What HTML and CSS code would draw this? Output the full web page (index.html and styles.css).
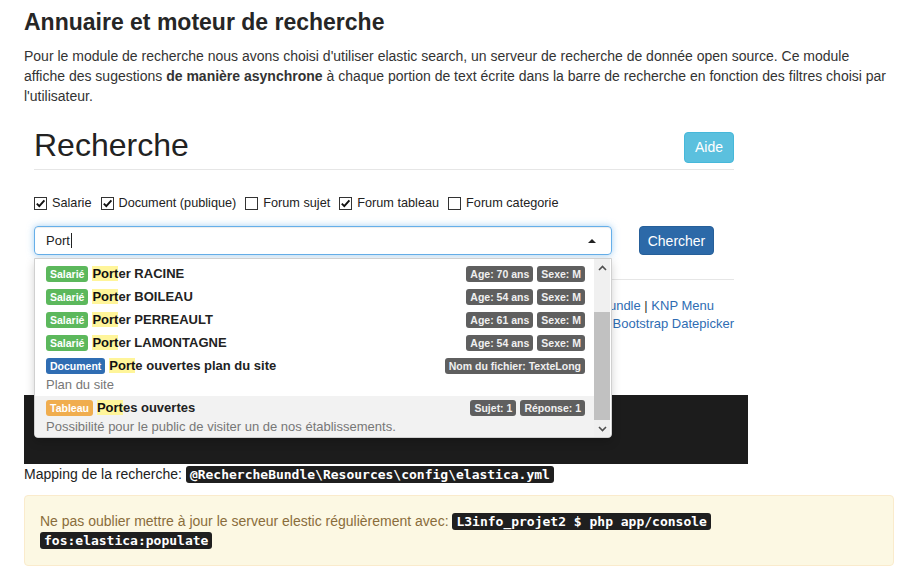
FILE: index.html
```html
<!DOCTYPE html>
<html lang="fr">
<head>
<meta charset="utf-8">
<title>Annuaire et moteur de recherche</title>
<link rel="stylesheet" href="styles.css">
</head>
<body>
<div class="page">
  <h2 class="title">Annuaire et moteur de recherche</h2>
  <p class="intro">Pour le module de recherche nous avons choisi d'utiliser elastic search, un serveur de recherche de donnée open source. Ce module affiche des sugestions <strong>de manière asynchrone</strong> à chaque portion de text écrite dans la barre de recherche en fonction des filtres choisi par l'utilisateur.</p>

  <div class="shot">
    <div class="shot-inner">
      <div class="head">
        <h1>Recherche</h1>
        <span class="btn btn-aide">Aide</span>
      </div>
      <div class="filters">
        <span class="filter"><span class="cb"><svg viewBox="0 0 11 11" width="11" height="11"><path d="M1.8 5.6 L4.3 8.2 L9.4 2.4" fill="none" stroke="#111" stroke-width="1.9"/></svg></span>Salarie</span>
        <span class="filter"><span class="cb"><svg viewBox="0 0 11 11" width="11" height="11"><path d="M1.8 5.6 L4.3 8.2 L9.4 2.4" fill="none" stroke="#111" stroke-width="1.9"/></svg></span>Document (publique)</span>
        <span class="filter"><span class="cb"></span>Forum sujet</span>
        <span class="filter"><span class="cb"><svg viewBox="0 0 11 11" width="11" height="11"><path d="M1.8 5.6 L4.3 8.2 L9.4 2.4" fill="none" stroke="#111" stroke-width="1.9"/></svg></span>Forum tableau</span>
        <span class="filter"><span class="cb"></span>Forum categorie</span>
      </div>
      <div class="search">
        <div class="search-input"><span class="typed">Port</span><span class="cursor"></span><span class="caret-up"></span></div>
        <span class="btn btn-go">Chercher</span>

        <div class="dropdown">
          <div class="list">
            <div class="row">
              <div class="line"><span class="lbl green">Salarié</span><span class="name"><mark>Port</mark>er DUPONT</span><span class="rbadges"><span class="lbl gray">Age: 40 ans</span><span class="lbl gray">Sexe: M</span></span></div>
            </div>
            <div class="row">
              <div class="line"><span class="lbl green">Salarié</span><span class="name"><mark>Port</mark>er RACINE</span><span class="rbadges"><span class="lbl gray">Age: 70 ans</span><span class="lbl gray">Sexe: M</span></span></div>
            </div>
            <div class="row">
              <div class="line"><span class="lbl green">Salarié</span><span class="name"><mark>Port</mark>er BOILEAU</span><span class="rbadges"><span class="lbl gray">Age: 54 ans</span><span class="lbl gray">Sexe: M</span></span></div>
            </div>
            <div class="row">
              <div class="line"><span class="lbl green">Salarié</span><span class="name"><mark>Port</mark>er PERREAULT</span><span class="rbadges"><span class="lbl gray">Age: 61 ans</span><span class="lbl gray">Sexe: M</span></span></div>
            </div>
            <div class="row">
              <div class="line"><span class="lbl green">Salarié</span><span class="name"><mark>Port</mark>er LAMONTAGNE</span><span class="rbadges"><span class="lbl gray">Age: 54 ans</span><span class="lbl gray">Sexe: M</span></span></div>
            </div>
            <div class="row">
              <div class="line"><span class="lbl blue">Document</span><span class="name"><mark>Port</mark>e ouvertes plan du site</span><span class="rbadges"><span class="lbl gray">Nom du fichier: TexteLong</span></span></div>
              <div class="sub">Plan du site</div>
            </div>
            <div class="row active">
              <div class="line"><span class="lbl orange">Tableau</span><span class="name"><mark>Port</mark>es ouvertes</span><span class="rbadges"><span class="lbl gray">Sujet: 1</span><span class="lbl gray">Réponse: 1</span></span></div>
              <div class="sub">Possibilité pour le public de visiter un de nos établissements.</div>
            </div>
          </div>
          <div class="scrollbar">
            <span class="sb-btn"><svg viewBox="0 0 9 6" width="9" height="6"><path d="M1 5 L4.5 1.5 L8 5" fill="none" stroke="#505050" stroke-width="1.6"/></svg></span>
            <span class="sb-track"><span class="sb-thumb"></span></span>
            <span class="sb-btn"><svg viewBox="0 0 9 6" width="9" height="6"><path d="M1 1 L4.5 4.5 L8 1" fill="none" stroke="#505050" stroke-width="1.6"/></svg></span>
          </div>
        </div>
      </div>
      <div class="sep"></div>
      <div class="links">
        <div class="link-line l1"><a>FOSUserBundle</a> | <a>FOSElasticaBundle</a> | <a>KNP Menu</a></div>
        <div class="link-line"><a>jQuery UI</a> | <a>Bootstrap Datepicker</a></div>
      </div>
    </div>
    <div class="black"></div>
  </div>

  <div class="mapping">Mapping de la recherche: <code>@RechercheBundle\Resources\config\elastica.yml</code></div>

  <div class="alert">Ne pas oublier mettre à jour le serveur elestic régulièrement avec: <code>L3info_projet2 $ php app/console fos:elastica:populate</code></div>
</div>
</body>
</html>
```
FILE: styles.css
```css
body {
  margin: 0;
  background: #fff;
  color: #333;
  font-family: "Liberation Sans", Arial, sans-serif;
}

.page {
  padding: 0 24px;
}

.title {
  margin: 9px 0 11px;
  font-size: 23px;
  line-height: 26px;
  font-weight: bold;
  color: #262626;
}

.intro {
  margin: 0;
  font-size: 14px;
  line-height: 20px;
  color: #333;
}

.shot {
  margin-top: 10px;
  width: 724px;
  background: #fff;
}

.shot-inner {
  padding: 0 14px 0 10px;
}

.head {
  display: flex;
  justify-content: space-between;
  align-items: center;
  padding: 13px 0 4px;
  border-bottom: 1px solid #e6e6e6;
}

.head h1 {
  margin: 0;
  padding-bottom: 4px;
  font-size: 32px;
  line-height: 32px;
  font-weight: normal;
  color: #222;
}

.btn {
  display: inline-flex;
  align-items: center;
  justify-content: center;
  box-sizing: border-box;
  border-radius: 4px;
  color: #fff;
  font-size: 14px;
}

.btn-aide {
  width: 50px;
  height: 31px;
  background: #5bc0de;
  border: 1px solid #46b8da;
}

.filters {
  display: flex;
  align-items: center;
  margin-top: 24px;
  height: 18px;
  font-size: 12.7px;
  color: #222;
}

.filter {
  display: inline-flex;
  align-items: center;
  margin-right: 9px;
}

.cb {
  display: inline-flex;
  align-items: center;
  justify-content: center;
  box-sizing: border-box;
  width: 13px;
  height: 13px;
  margin-right: 5px;
  border: 1px solid #333;
  background: #fff;
}

.search {
  position: relative;
  display: flex;
  gap: 27px;
  margin-top: 14px;
}

.search-input {
  position: relative;
  display: flex;
  align-items: center;
  box-sizing: border-box;
  width: 578px;
  height: 29px;
  padding-left: 11px;
  border: 1px solid #66afe9;
  border-radius: 4px;
  box-shadow: inset 0 1px 1px rgba(0,0,0,.075), 0 0 7px rgba(102,175,233,.6);
  font-size: 13px;
  color: #222;
}

.cursor {
  width: 1px;
  height: 15px;
  background: #222;
  margin-left: 1px;
}

.caret-up {
  position: absolute;
  right: 15px;
  top: 12px;
  width: 0;
  height: 0;
  border-left: 4px solid transparent;
  border-right: 4px solid transparent;
  border-bottom: 4px solid #222;
}

.btn-go {
  width: 75px;
  height: 29px;
  background: #2c69a8;
  border: 1px solid #265f99;
}

.dropdown {
  position: absolute;
  left: 0;
  top: 32px;
  z-index: 5;
  display: flex;
  box-sizing: border-box;
  width: 578px;
  height: 180px;
  background: #fff;
  border: 1px solid #d0d0d0;
  border-radius: 0 0 4px 4px;
  box-shadow: 0 4px 10px rgba(0,0,0,.18);
  overflow: hidden;
}

.list {
  flex: 1;
  overflow: hidden;
}

.list > .row:first-child {
  margin-top: -20px;
}

.row {
  padding: 2px 9px 2px 11px;
}

.row.active {
  background: #f2f2f2;
}

.line {
  display: flex;
  align-items: center;
  height: 19px;
}

.name {
  margin-left: 4px;
  font-size: 13px;
  font-weight: bold;
  color: #222;
}

.name mark {
  background: #fff59a;
  color: #111;
}

.rbadges {
  display: flex;
  gap: 4px;
  margin-left: auto;
}

.lbl {
  display: inline-block;
  height: 16px;
  padding: 0 4px;
  border-radius: 3px;
  font-size: 10.5px;
  line-height: 16px;
  font-weight: bold;
  color: #fff;
  white-space: nowrap;
}

.green { background: #5cb85c; }
.blue { background: #2f6db3; }
.orange { background: #f0ad4e; }
.gray { background: #5f5f5f; color: #f0f0f0; }

.sub {
  height: 19px;
  font-size: 13px;
  line-height: 19px;
  color: #777;
}

.scrollbar {
  display: flex;
  flex-direction: column;
  width: 16px;
  margin-right: 1px;
  background: #f0f0f0;
}

.sb-btn {
  display: flex;
  align-items: center;
  justify-content: center;
  height: 17px;
}

.sb-track {
  flex: 1;
  display: flex;
  flex-direction: column;
}

.sb-thumb {
  display: block;
  margin-top: 36px;
  height: 108px;
  background: #c1c1c1;
}

.sep {
  margin-top: 24px;
  border-top: 1px solid #e6e6e6;
}

.links {
  margin: 17px 0 62px;
  font-size: 13px;
  line-height: 18px;
  text-align: right;
  color: #333;
}

.links .l1 {
  padding-right: 20px;
}

.links a {
  color: #2f6db3;
}

.black {
  height: 69px;
  background: #1c1c1c;
}

.mapping {
  font-size: 14px;
  line-height: 20px;
  color: #222;
}

code {
  padding: 1px 4px;
  border-radius: 3px;
  background: #1f1f1f;
  color: #fff;
  font-family: "DejaVu Sans Mono", monospace;
  font-size: 13px;
  font-weight: bold;
  -webkit-box-decoration-break: clone;
  box-decoration-break: clone;
}

.alert {
  margin-top: 10px;
  padding: 16px 30px 15px 15px;
  border: 1px solid #faebcc;
  border-radius: 4px;
  background: #fcf8e3;
  color: #8a6d3b;
  font-size: 14px;
  line-height: 18px;
}
```
